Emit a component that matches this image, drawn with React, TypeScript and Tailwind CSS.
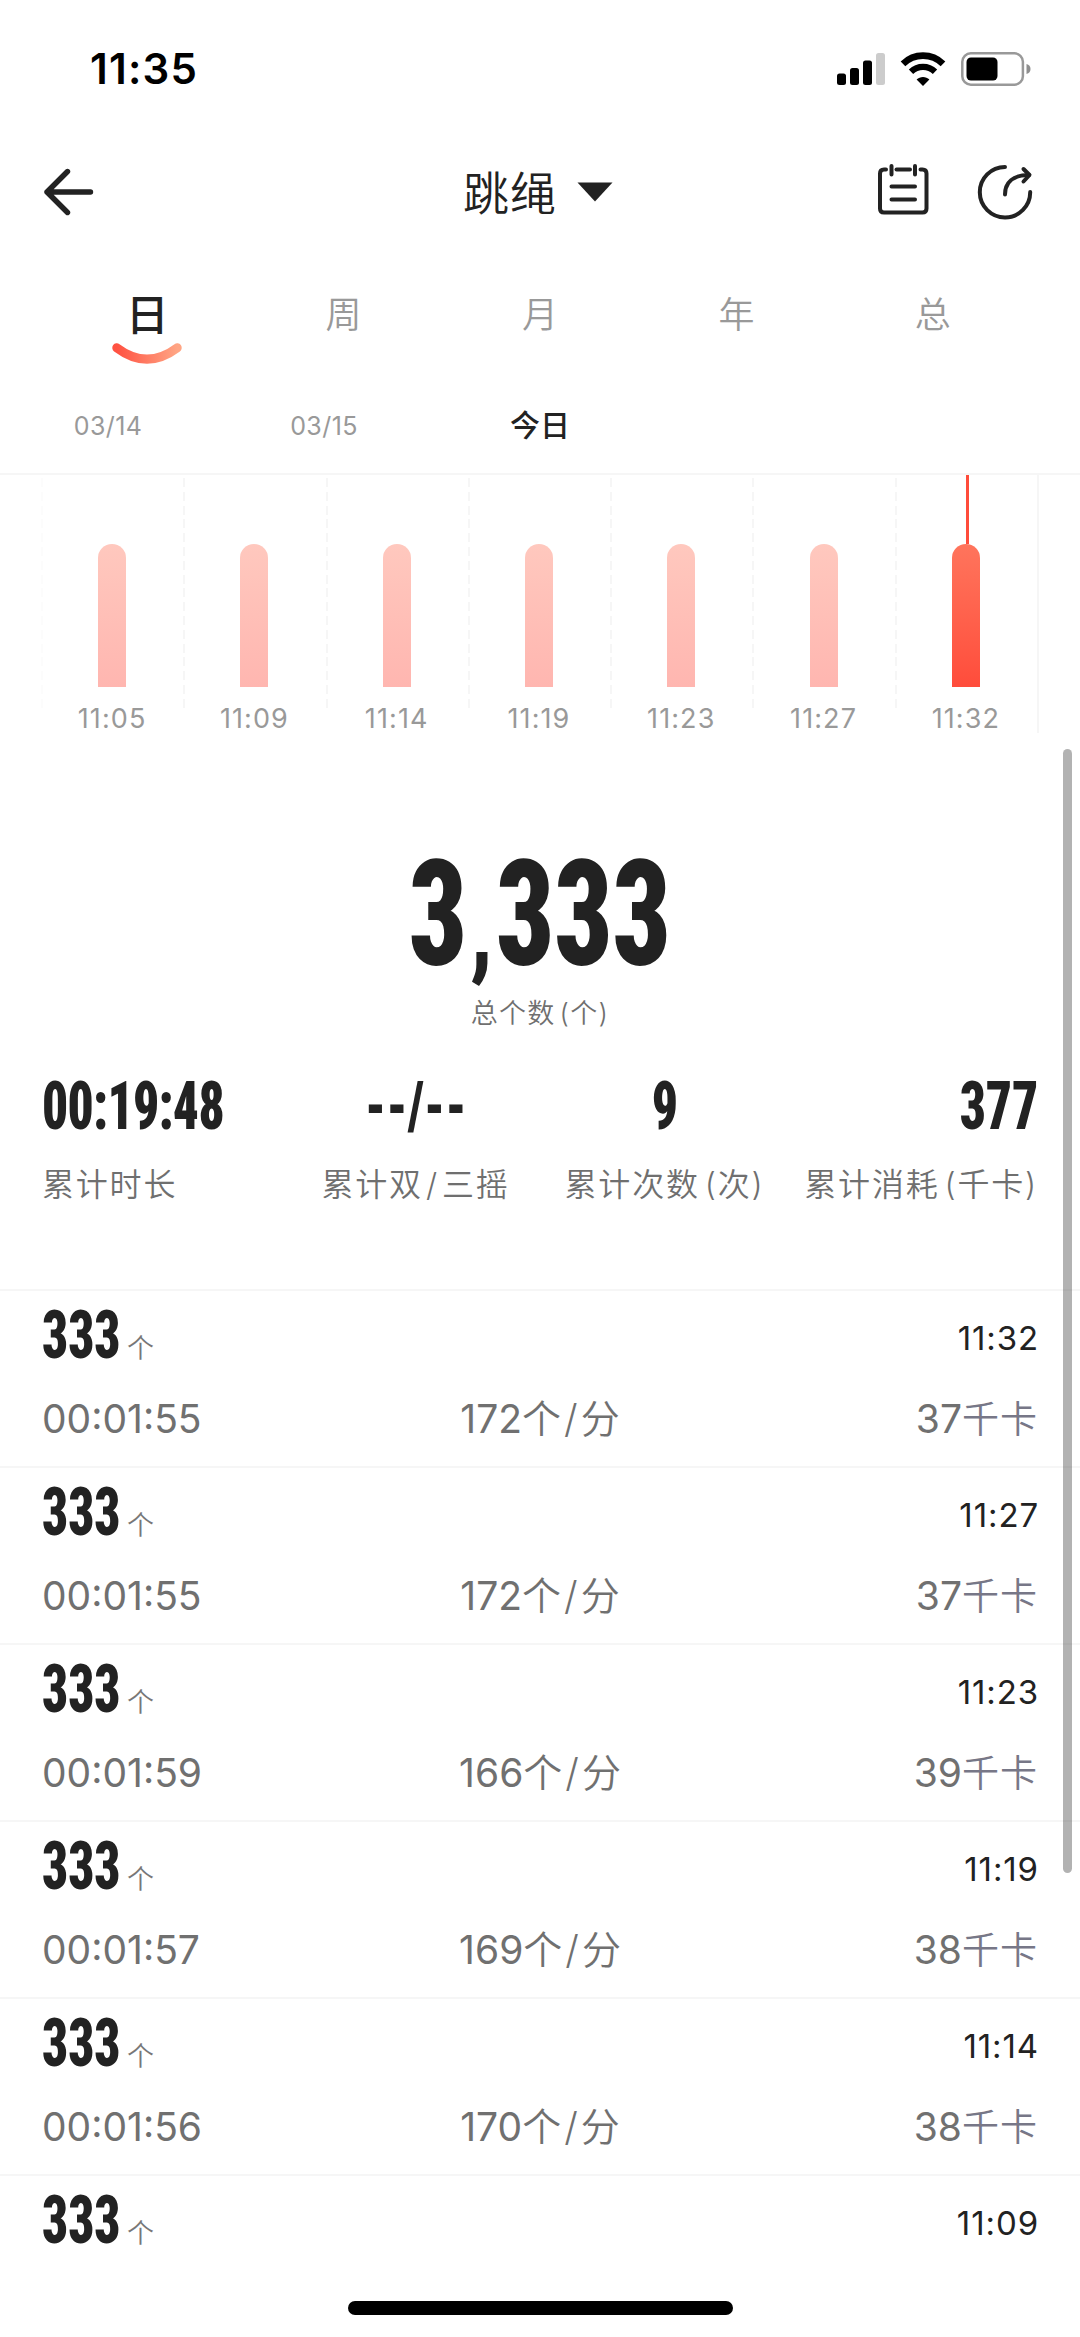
import React from 'react';

const TABS = ['日', '周', '月', '年', '总'];

const DATES = ['03/14', '03/15', '今日', '', ''];

const BARS = ['11:05', '11:09', '11:14', '11:19', '11:23', '11:27', '11:32'];

interface JumpRecord {
  count: number;
  time: string;
  duration: string;
  speed: number;
  kcal: number;
}

const RECORDS: JumpRecord[] = [
  { count: 333, time: '11:32', duration: '00:01:55', speed: 172, kcal: 37 },
  { count: 333, time: '11:27', duration: '00:01:55', speed: 172, kcal: 37 },
  { count: 333, time: '11:23', duration: '00:01:59', speed: 166, kcal: 39 },
  { count: 333, time: '11:19', duration: '00:01:57', speed: 169, kcal: 38 },
  { count: 333, time: '11:14', duration: '00:01:56', speed: 170, kcal: 38 },
  { count: 333, time: '11:09', duration: '', speed: 0, kcal: 0 },
];

function StatusBar() {
  return (
    <div className="flex h-[137px] shrink-0 items-center justify-between pl-[90px] pr-[49px] text-black">
      <span className="text-[42px] font-semibold leading-none tracking-[1.2px]">11:35</span>
      <div className="flex items-center">
        <svg width="48" height="32" viewBox="0 0 48 32" className="mr-[15px]">
          <rect x="0" y="20.5" width="9" height="11.5" rx="2.5" />
          <rect x="13" y="15" width="9" height="17" rx="2.5" />
          <rect x="26" y="7.5" width="9" height="24.5" rx="2.5" />
          <rect x="39" y="0" width="9" height="32" rx="2.5" fill="#cccccc" />
        </svg>
        <svg width="46" height="34" viewBox="0 0 46 34" className="mr-[15px]">
          <path d="M3 11.8A28.5 28.5 0 0 1 43 11.8" fill="none" stroke="#000" strokeWidth="6.6" />
          <path d="M11 19.8A17.2 17.2 0 0 1 35 19.8" fill="none" stroke="#000" strokeWidth="6.2" />
          <path d="M23 34L16.6 27.6C20 24 26 24 29.4 27.6Z" />
        </svg>
        <svg width="70" height="34" viewBox="0 0 70 34">
          <rect x="1.3" y="1.3" width="60.6" height="31.4" rx="8.5" fill="none" stroke="#999999" strokeWidth="2.5" />
          <rect x="5.5" y="5.5" width="31" height="23" rx="4.5" />
          <path d="M65.5 12Q69.5 13 69.5 17T65.5 22Z" fill="#8e8e8e" />
        </svg>
      </div>
    </div>
  );
}

function NavBar() {
  return (
    <div className="grid h-[109px] shrink-0 grid-cols-[1fr_auto_1fr] items-center pl-[43px] pr-[47px]">
      <svg width="52" height="48" viewBox="0 0 52 48" fill="none" stroke="#222222" strokeWidth="5.4" strokeLinecap="round" strokeLinejoin="round">
        <path d="M24.5 3.5L4 24L24.5 44.5M4 24H47.5" />
      </svg>
      <div className="flex items-center gap-[20px] text-[46px] leading-none text-[#222222]">
        <span className="mt-[2px] font-[350] tracking-[1px]">跳绳</span>
        <svg width="36" height="20" viewBox="0 0 36 20" fill="#222222">
          <path d="M0.5 0.5H35.5L18 19.5Z" />
        </svg>
      </div>
      <div className="flex items-center justify-end gap-[48px]">
        <svg width="52" height="54" viewBox="0 0 52 54" fill="none" stroke="#222222" strokeWidth="4" strokeLinecap="round" strokeLinejoin="round" className="-mt-[5px]">
          <path d="M9 7.5H7Q3 7.5 3 11.5V46.5Q3 50.5 7 50.5H45.5Q49.5 50.5 49.5 46.5V11.5Q49.5 7.5 45.5 7.5H43.5" />
          <path d="M19.5 7.5H33" />
          <path d="M14.5 4V12.5M38 4V12.5" />
          <path d="M14.5 24.5H38M14.5 37.5H38" />
        </svg>
        <svg width="56" height="56" viewBox="0 0 56 56" fill="none" stroke="#222222" strokeWidth="4" strokeLinecap="round" strokeLinejoin="round">
          <path d="M28 3A25.2 25.2 0 1 0 53.2 28" />
          <path d="M28 30.5C28 18.5 36 11 52 11" />
          <path d="M46.5 5L52.5 11L46.5 17.5" />
        </svg>
      </div>
    </div>
  );
}

function PeriodTabs() {
  return (
    <div className="grid h-[138px] shrink-0 grid-cols-5 px-[49px] pt-[41px]">
      {TABS.map((tab, i) => (
        <div key={tab} className="flex flex-col items-center">
          <span
            className={
              i === 0
                ? 'text-[43px] font-medium leading-[56px] text-[#222222]'
                : 'text-[36px] font-[350] leading-[56px] text-[#999999]'
            }
          >
            {tab}
          </span>
          {i === 0 && (
            <svg width="70" height="21" viewBox="0 0 70 21" fill="none">
              <defs>
                <linearGradient id="smile" x1="0" x2="1" y1="0" y2="0">
                  <stop offset="0" stopColor="#ff5242" />
                  <stop offset="1" stopColor="#ffa584" />
                </linearGradient>
              </defs>
              <path d="M4.8 4.8Q35 27.4 65.2 4.8" stroke="url(#smile)" strokeWidth="9" strokeLinecap="round" />
            </svg>
          )}
        </div>
      ))}
    </div>
  );
}

function DateStrip() {
  return (
    <div className="grid h-[91px] shrink-0 grid-cols-5 border-b-2 border-[#f6f6f6] pb-[5px] text-center">
      {DATES.map((date, i) => (
        <span
          key={i}
          className={
            date === '今日'
              ? 'text-[30px] font-medium leading-[82px] text-[#222222]'
              : 'text-[25px] leading-[84px] tracking-[0.4px] text-[#999999]'
          }
        >
          {date}
        </span>
      ))}
    </div>
  );
}

function BarChart() {
  return (
    <div className="ml-[41px] grid h-[258px] w-[998px] shrink-0 grid-cols-7 border-r-2 border-[#f6f6f6]">
      {BARS.map((label, i) => {
        const active = i === BARS.length - 1;
        return (
          <div key={label} className="flex flex-col">
            <div
              className={`flex h-[233px] flex-col items-center justify-end bg-[length:2px_230px] bg-[position:0_3px] bg-no-repeat pb-[21px] ${
                i === 0
                  ? 'bg-[repeating-linear-gradient(to_bottom,#fcfcfc_0_9px,transparent_9px_13.8px)]'
                  : 'bg-[repeating-linear-gradient(to_bottom,#f6f6f6_0_9px,transparent_9px_13.8px)]'
              }`}
            >
              {active && <div className="ml-[3px] h-[70px] w-[3px] bg-[#ff4c3b]" />}
              <div
                className={`h-[143px] w-[28px] shrink-0 rounded-t-full bg-linear-to-b ${
                  active ? 'from-[#ff745c] to-[#ff4c3b]' : 'from-[#ffc8be] to-[#ffb6b0]'
                }`}
              />
            </div>
            <span className="text-center text-[27px] leading-[21px] tracking-[1.1px] text-[#999999]">{label}</span>
          </div>
        );
      })}
    </div>
  );
}

// Condensed display digits
function Digits({ children, className }: { children: React.ReactNode; className: string }) {
  return (
    <span className={`inline-block scale-x-[0.776] whitespace-nowrap font-['Roboto_Condensed',Roboto,sans-serif] font-black text-[#222222] ${className}`}>
      {children}
    </span>
  );
}

function Summary() {
  return (
    <div className="shrink-0 px-[42px] pb-[84px] pt-[122px] text-center font-[350] text-[#6f6f6f]">
      <div className="h-[120px]">
        <Digits className="origin-center text-[147px] leading-[120px]">
          3<span className="mx-[4px] text-[108px] leading-none">,</span>333
        </Digits>
      </div>
      <p className="mt-[19px] text-[27px] leading-[40px] tracking-[1.3px]">
        总个数<span className="ml-[4px]">(个)</span>
      </p>
      <div className="mt-[43px] grid grid-cols-4 text-[32px] leading-[40px] tracking-[1.8px]">
        <div className="text-left">
          <Digits className="h-[60px] origin-left text-[66px] leading-[60px] tracking-[-0.8px]">00:19:48</Digits>
          <p className="mt-[27px] whitespace-nowrap">累计时长</p>
        </div>
        <div className="flex flex-col items-center">
          <Digits className="h-[60px] origin-center text-[66px] leading-[60px] tracking-normal">--/--</Digits>
          <p className="mt-[28px] whitespace-nowrap">
            累计双<span className="mx-[3px]">/</span>三摇
          </p>
        </div>
        <div className="flex flex-col items-center">
          <Digits className="h-[60px] origin-center text-[66px] leading-[60px] tracking-normal">9</Digits>
          <p className="mt-[28px] whitespace-nowrap">
            累计次数<span className="ml-[5px]">(次)</span>
          </p>
        </div>
        <div className="flex flex-col items-end">
          <Digits className="h-[60px] origin-right text-[66px] leading-[60px] tracking-normal">377</Digits>
          <p className="mt-[28px] whitespace-nowrap">
            累计消耗<span className="ml-[5px]">(千卡)</span>
          </p>
        </div>
      </div>
    </div>
  );
}

function RecordRow({ record }: { record: JumpRecord }) {
  return (
    <div className="h-[177px] shrink-0 border-t-2 border-[#f6f6f6] px-[42px] pt-[15px]">
      <div className="flex h-[60px] items-center justify-between">
        <div className="flex items-center">
          <div className="w-[85px]">
            <Digits className="origin-left text-[66px] leading-[60px]">{record.count}</Digits>
          </div>
          <span className="mt-[26px] text-[27px] font-[350] leading-[30px] text-[#777777]">个</span>
        </div>
        <span className="-mr-px mt-[5px] text-[33px] leading-none tracking-[0.9px] text-[#222222]">{record.time}</span>
      </div>
      {record.duration && (
        <div className="mt-[30px] grid grid-cols-3 text-[39px] leading-[46px] text-[#707070]">
          <span>{record.duration}</span>
          <span className="text-center">
            {record.speed}
            <span className="font-[350]">个<span className="mx-[3px]">/</span>分</span>
          </span>
          <span className="text-right">
            {record.kcal}
            <span className="text-[37px] font-[350] tracking-[1px] text-[#777787]">千卡</span>
          </span>
        </div>
      )}
    </div>
  );
}

export default function App() {
  return (
    <div className="relative flex h-[2337px] w-[1080px] flex-col overflow-hidden bg-white font-[Inter,'Noto_Sans_CJK_SC',sans-serif]">
      <StatusBar />
      <NavBar />
      <PeriodTabs />
      <DateStrip />
      <BarChart />
      <Summary />
      {RECORDS.map((record) => (
        <RecordRow key={record.time} record={record} />
      ))}

      {/* scroll indicator and home indicator float above the list */}
      <div className="absolute right-[8px] top-[749px] h-[1124px] w-[9px] rounded-full bg-black/30" />
      <div className="absolute bottom-[22px] left-[348px] h-[14px] w-[385px] rounded-full bg-black" />
    </div>
  );
}
